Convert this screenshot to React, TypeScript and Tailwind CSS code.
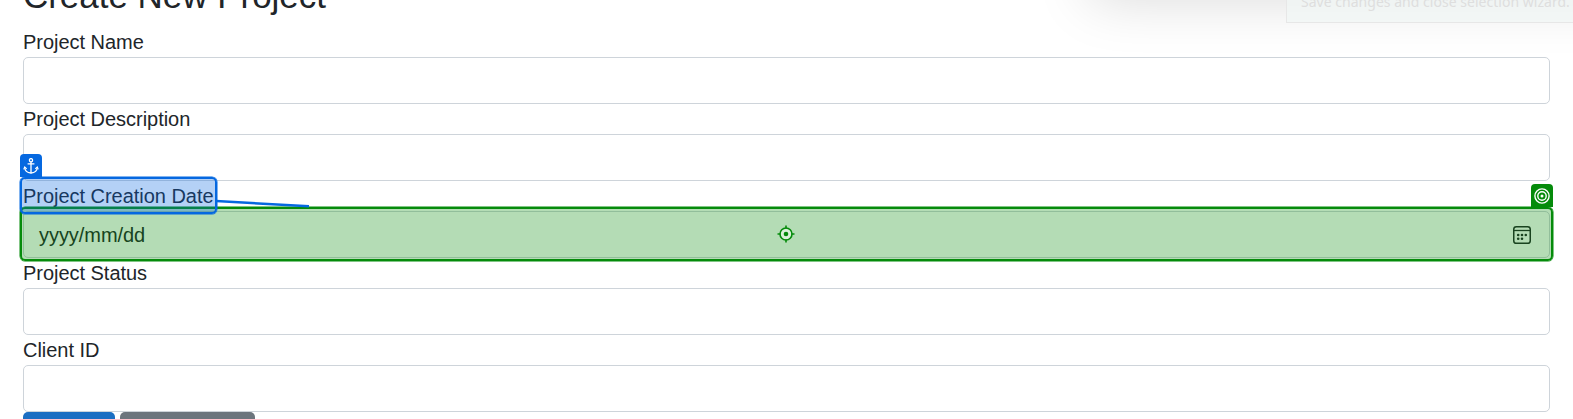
import type { ReactNode } from "react";

function Field({ label, children }: { label: string; children?: ReactNode }) {
  return (
    <div className="flex flex-col">
      <label className="h-[30px] text-[20px] leading-[30px] tracking-[-0.03px]">{label}</label>
      <div className="relative flex h-[47px] items-center rounded-[5px] border border-[#ced4da] bg-white px-[15px]">
        {children}
      </div>
    </div>
  );
}

function CalendarIcon() {
  return (
    <svg className="ml-auto mr-[3px] h-[18px] w-[18px]" viewBox="0 0 18 18" fill="none" stroke="#212529">
      <rect x="0.75" y="0.75" width="16.5" height="16.5" rx="2.6" strokeWidth="1.5" />
      <path d="M.75 4.500h16.500" strokeWidth="1.3" />
      <g fill="#212529" stroke="none">
        <circle cx="5.2" cy="9" r="1.3" />
        <circle cx="9" cy="9" r="1.3" />
        <circle cx="12.8" cy="9" r="1.3" />
        <circle cx="5.2" cy="12.7" r="1.3" />
        <circle cx="9" cy="12.7" r="1.3" />
      </g>
    </svg>
  );
}

function AnchorIcon() {
  return (
    <svg className="h-4 w-4" viewBox="0 0 16 16" fill="none" stroke="white" strokeWidth="1.3">
      <circle cx="8" cy="2.200" r="1.6" />
      <path d="M8 3.800v11.400M4.600 5.900h6.800" />
      <path d="M1.700 9.500c.2 3.300 3 5.200 6.300 5.500 3.300-.3 6.100-2.200 6.300-5.500" />
      <path d="M.7 11.400l1-2.500 2 1.900M15.300 11.400l-1-2.500-2 1.900" strokeWidth="1.100" />
    </svg>
  );
}

function TargetIcon() {
  return (
    <svg className="h-4 w-4" viewBox="0 0 16 16" fill="none" stroke="white" strokeWidth="1.4">
      <circle cx="8" cy="8" r="7.1" />
      <circle cx="8" cy="8" r="4.2" />
      <circle cx="8" cy="8" r="1.500" fill="white" stroke="none" />
    </svg>
  );
}

function CrosshairIcon() {
  return (
    <svg className="mr-[2px] h-[18px] w-[18px]" viewBox="0 0 18 18" fill="none" stroke="#058b0b" strokeWidth="1.6">
      <circle cx="9" cy="9" r="6" fill="#d9f0d9" />
      <circle cx="9" cy="9" r="2.3" fill="#058b0b" stroke="none" />
      <path d="M9 .5v3M9 14.500v3M.5 9h3M14.500 9h3" />
    </svg>
  );
}

export default function App() {
  return (
    <div className="relative h-[419px] overflow-hidden bg-white font-['Liberation_Sans',Arial,sans-serif] text-[#212529]">
      <main className="flex w-[1550px] flex-col pl-[23px]">
        <h1 className="-mt-[25px] mb-[10px] text-[35px] leading-[42px] tracking-[-0.03px]">Create New Project</h1>
        <Field label="Project Name" />
        <Field label="Project Description" />
        <Field label="Project Creation Date">
          <span className="text-[20px] leading-[30px] tracking-[-0.05px]">yyyy/mm/dd</span>
          <CalendarIcon />
        </Field>
        <Field label="Project Status" />
        <Field label="Client ID" />
        <div className="flex gap-[5px]">
          <div className="h-[47px] w-[92px] rounded-[5px] bg-[#1b6ec2]" />
          <div className="h-[47px] w-[135px] rounded-[5px] bg-[#6c757d]" />
        </div>
      </main>

      <div className="absolute -top-[100px] left-[1090px] h-[90px] w-[600px] shadow-[0_10px_56px_rgba(0,0,0,0.15)]" />
      <div className="absolute -top-[20px] left-[1286px] h-[43px] w-[300px] border border-[#e7e7e7] bg-[#f1f7f5]/70 pl-[14px] pt-[9px] font-['Noto_Sans',sans-serif] text-[14px] leading-[24px] tracking-[0.025px] whitespace-nowrap text-[#dedede]">
        Save changes and close selection wizard.
      </div>

      <div className="absolute left-[20px] top-[207px] flex h-[54px] w-[1533px] items-center justify-center rounded-[5px] border-2 border-[#058b0b] bg-[#058b0b]/30 shadow-[0_0_0_0.5px_#058b0b]">
        <CrosshairIcon />
      </div>
      <div className="absolute left-[1531px] top-[184px] flex h-[23px] w-[22px] items-center justify-center rounded-t-[4px] bg-[#058b0b]">
        <TargetIcon />
      </div>

      <svg className="absolute left-[216px] top-[198px] h-[12px] w-[96px]" viewBox="0 0 96 12">
        <path d="M0 3 93 8.300" stroke="#0568e0" strokeWidth="2.500" />
      </svg>
      <div className="absolute left-[20px] top-[177px] h-[37px] w-[197px] rounded-[5px] border-2 border-[#0568e0] bg-[#0568e0]/30 shadow-[0_0_0_0.5px_#0568e0]" />
      <div className="absolute left-[20px] top-[154px] flex h-[23px] w-[22px] items-center justify-center rounded-t-[4px] bg-[#0568e0]">
        <AnchorIcon />
      </div>
    </div>
  );
}
